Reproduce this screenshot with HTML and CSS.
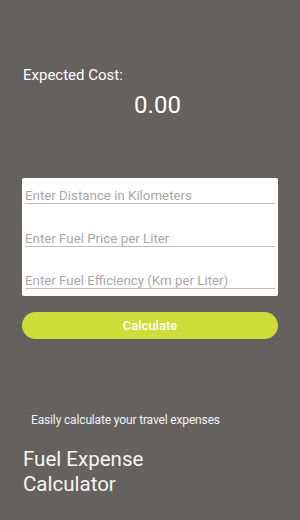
FILE: index.html
```html
<!DOCTYPE html>
<html>
<head>
<meta charset="utf-8">
<link rel="stylesheet" href="styles.css">
</head>
<body>
<div class="app">
  <div class="cost-label">Expected Cost:</div>
  <div class="cost-value">0.00</div>
  <div class="card">
    <div class="field">Enter Distance in Kilometers</div>
    <div class="field">Enter Fuel Price per Liter</div>
    <div class="field">Enter Fuel Efficiency (Km per Liter)</div>
  </div>
  <button class="calc">Calculate</button>
  <div class="tagline">Easily calculate your travel expenses</div>
  <div class="title">Fuel Expense<br>Calculator</div>
</div>
</body>
</html>
```
FILE: styles.css
```css
html, body {
  margin: 0;
  padding: 0;
}
body {
  background: #65615f;
  font-family: Roboto, "Noto Sans", sans-serif;
  color: #ffffff;
}
.app {
  width: 300px;
  height: 520px;
  box-sizing: border-box;
  padding: 67px 22px 0 22px;
  display: flex;
  flex-direction: column;
}
.cost-label {
  font-size: 15px;
  line-height: 16px;
  padding-left: 1px;
}
.cost-value {
  font-size: 24px;
  line-height: 28px;
  margin-top: 8px;
  text-align: center;
  padding-left: 15px;
}
.card {
  margin-top: 59px;
  background: #ffffff;
  border-radius: 2px;
  height: 118px;
  box-sizing: border-box;
  padding: 0 3px;
}
.field {
  color: #a8a8a8;
  font-size: 13.3px;
  line-height: 15px;
  padding: 0;
  border-bottom: 1.5px solid #bdbdbd;
  margin-top: 10px;
}
.field + .field {
  margin-top: 26.5px;
}
.calc {
  margin-top: 16px;
  height: 27px;
  border: none;
  border-radius: 14px;
  background: #cddc39;
  color: #ffffff;
  font-family: Roboto, "Noto Sans", sans-serif;
  font-weight: 500;
  font-size: 13px;
  padding: 0;
}
.tagline {
  margin-top: 74px;
  padding-left: 9px;
  font-size: 12px;
  letter-spacing: -0.15px;
  line-height: 14px;
  color: #f2f2f2;
}
.title {
  margin-top: 20px;
  font-size: 20.5px;
  line-height: 25px;
  padding-left: 1px;
  color: #f5f5f5;
}
```
